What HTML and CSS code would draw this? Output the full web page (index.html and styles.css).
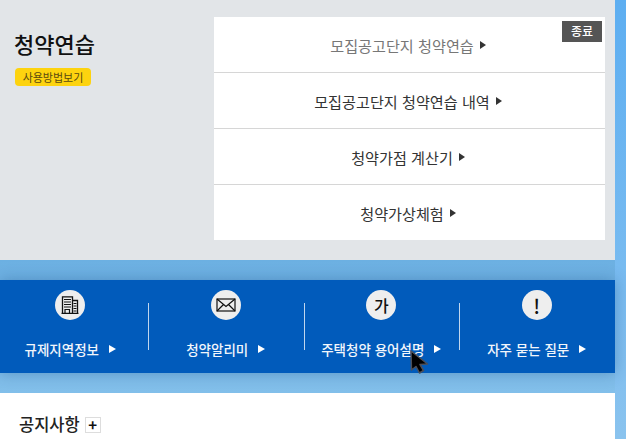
FILE: index.html
```html
<!DOCTYPE html>
<html lang="ko">
<head>
<meta charset="utf-8">
<title>청약연습</title>
<link rel="stylesheet" href="styles.css">
</head>
<body>
<div class="page">
  <section class="hero">
    <div class="intro">
      <h1 class="title">청약연습</h1>
      <a class="guide">사용방법보기</a>
    </div>
    <div class="panel">
      <span class="close">종료</span>
      <a class="row muted">모집공고단지 청약연습<i class="tri"></i></a>
      <a class="row">모집공고단지 청약연습 내역<i class="tri"></i></a>
      <a class="row">청약가점 계산기<i class="tri"></i></a>
      <a class="row">청약가상체험<i class="tri"></i></a>
    </div>
  </section>
  <div class="band-wrap">
    <nav class="band">
      <a class="item">
        <span class="circle">
          <svg width="18" height="18" viewBox="0 0 18 18" fill="none" stroke="#111" stroke-width="1">
            <path d="M1.500 17.500V.8H11.500V17.500M11.500 4.500H16.500V17.500M.5 17.500H17.500" stroke-width="1.300"/>
            <path d="M3 3.500H10M3 6H10M3 8.500H10M3 11H10M12.500 7.500H15.500M12.500 10H15.500M12.500 12.500H15.500M12.500 15H15.500"/>
            <path d="M4 17.500V13.500H8.500V17.500" stroke-width="1.200"/>
          </svg>
        </span>
        <span class="label">규제지역정보<i class="tri white"></i></span>
      </a>
      <a class="item">
        <span class="circle">
          <svg width="20" height="14" viewBox="0 0 20 14" fill="none" stroke="#111" stroke-width="1.200">
            <rect x="1" y="1" width="18" height="12"/>
            <path d="M1 1L10 8.500L19 1M1 13L7.500 6.500M19 13L12.500 6.500"/>
          </svg>
        </span>
        <span class="label">청약알리미<i class="tri white"></i></span>
      </a>
      <a class="item">
        <span class="circle glyph">가</span>
        <span class="label">주택청약 용어설명<i class="tri white"></i></span>
      </a>
      <a class="item">
        <span class="circle glyph bang">!</span>
        <span class="label">자주 묻는 질문<i class="tri white"></i></span>
      </a>
      <svg class="cursor" width="24" height="26" viewBox="0 0 24 26">
        <path d="M3 1L3.500 20L8 16.500L11.500 23L15.500 20.500L12 14.500L19.500 14Z" fill="#000" stroke="#4a4f5a" stroke-width="1.500" stroke-linejoin="round"/>
        <path d="M4.500 5L5 16.500L8.500 13.500L12 20L13 19.500L9.500 12.800L15.500 12.500Z" fill="#000"/>
      </svg>
    </nav>
  </div>
  <section class="notice">
    <h2 class="notice-title">공지사항</h2>
    <span class="plus">+</span>
  </section>
</div>
</body>
</html>
```

FILE: styles.css
```css
* { box-sizing: border-box; }
html, body { margin: 0; height: 100%; overflow: hidden; }
body {
  background: linear-gradient(180deg, #5daef1 0%, #7cbdf0 70%, #8ac3ee 100%);
  font-family: "Noto Sans CJK KR", "Noto Sans", sans-serif;
}
.page { width: 615px; }
.hero {
  height: 260px;
  background: #e2e5e8;
  display: flex;
  justify-content: space-between;
  padding: 17px 10px 20px 14px;
}
.title { margin: 11px 0 0; font-size: 22px; line-height: 30px; font-weight: 500; color: #111; }
.guide {
  display: block;
  margin: 10px 0 0 1px;
  width: 76px;
  height: 18px;
  background: #fdd30f;
  border-radius: 4px;
  color: #5a4a10;
  font-size: 11px;
  line-height: 18px;
  text-align: center;
}
.panel { position: relative; width: 391px; height: 223px; background: #fff; display: flex; flex-direction: column; }
.row {
  flex: 1;
  display: flex;
  align-items: center;
  justify-content: center;
  font-size: 15.150px;
  color: #333;
  border-top: 1px solid #d6d6d6;
  padding-right: 3px;
}
.row:first-of-type { border-top: 0; }
.row.muted { color: #777; }
.tri {
  display: inline-block;
  margin-left: 6px;
  border-left: 6px solid #333;
  border-top: 4px solid transparent;
  border-bottom: 4px solid transparent;
}
.tri.white { margin-left: 10px; border-left: 7px solid #fff; }
.close {
  position: absolute;
  top: 4px;
  right: 3px;
  width: 40px;
  height: 21px;
  background: #555;
  color: #fff;
  font-size: 12px;
  font-weight: 500;
  line-height: 20px;
  text-align: center;
}
.band-wrap {
  padding: 20px 0;
  background: linear-gradient(180deg, #6cb0e2 0%, #82bfea 100%);
}
.band {
  position: relative;
  height: 93px;
  background: #015bbb;
  box-shadow: 0 0 14px rgba(0, 50, 110, .3);
  display: flex;
  padding-top: 10px;
}
.item {
  width: 155.500px;
  flex: none;
  height: 71px;
  display: flex;
  flex-direction: column;
  align-items: center;
  position: relative;
  color: #fff;
}
.item:first-of-type { margin-left: -7.500px; }
.item + .item::before {
  content: "";
  position: absolute;
  left: 0;
  top: 13px;
  height: 47px;
  width: 1px;
  background: #c0d6ee;
}
.circle {
  width: 30px;
  height: 30px;
  border-radius: 50%;
  background: #eee;
  display: flex;
  align-items: center;
  justify-content: center;
}
.glyph { color: #111; font-size: 16px; font-weight: 500; }
.bang { font-size: 20px; font-weight: 500; }
.label {
  margin-top: 20px;
  font-size: 13.500px;
  line-height: 18px;
  font-weight: 500;
  display: flex;
  align-items: center;
  color: #f2f6fb;
  white-space: nowrap;
}
.cursor { position: absolute; left: 408px; top: 70px; }
.notice {
  height: 60px;
  background: #fff;
  padding: 20px 0 0 19px;
  display: flex;
  align-items: flex-start;
  gap: 5px;
}
.notice-title { margin: 0; font-size: 16.500px; line-height: 22px; font-weight: 500; color: #222; }
.plus {
  width: 16px;
  height: 16px;
  margin-top: 4px;
  background: #fff;
  border: 1px solid #ddd;
  color: #111;
  font-size: 15px;
  font-weight: 700;
  line-height: 13px;
  text-align: center;
}
```
